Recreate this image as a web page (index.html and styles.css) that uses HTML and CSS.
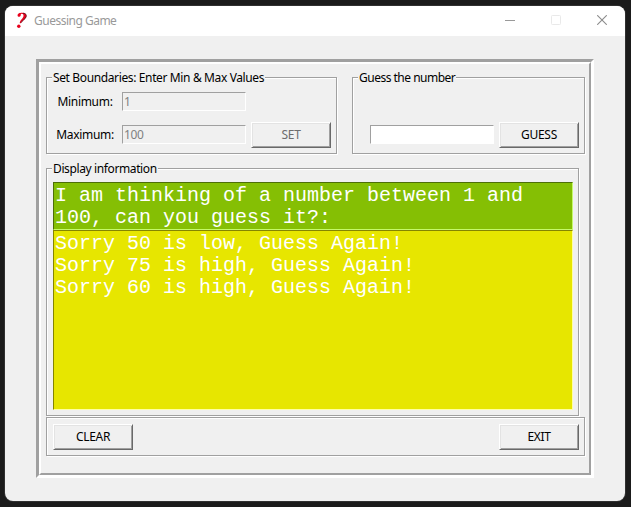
FILE: index.html
```html
<!DOCTYPE html>
<html lang="en">
<head>
<meta charset="utf-8">
<title>Guessing Game</title>
<link rel="stylesheet" href="styles.css">
</head>
<body>
<main class="window">
  <header class="titlebar">
    <svg class="logo" width="12" height="17" viewBox="0 0 12 17">
      <path d="M1.600 3.800C1.400 1.500 3.500.8 6 .8c3.200 0 4.600 1.300 4.200 3.700C9.700 7.600 5.600 8.500 4.800 11.300L3.800 11.200C3.600 8.300 7.200 6.700 7.500 4 7.700 2.500 6.600 1.600 5.200 1.900 4.500 2.100 4.900 3 4.600 3.700 4.100 5.100 1.800 5.100 1.600 3.800Z" fill="#e8001c"/>
      <path d="M7 1.200C10 1.400 10.600 3 10.100 4.800 9.400 7.300 6 8.400 5 10.800" fill="none" stroke="#6d1720" stroke-width="1"/>
      <circle cx="2.800" cy="14.200" r="1.700" fill="#e8001c"/>
    </svg>
    <h1 class="title">Guessing Game</h1>
    <div class="controls">
      <svg width="10" height="10" viewBox="0 0 10 10"><path d="M0 5.500H10" stroke="#999"/></svg>
      <svg width="10" height="10" viewBox="0 0 10 10"><rect x=".5" y=".5" width="9" height="9" rx=".8" fill="none" stroke="#e9e9e9"/></svg>
      <svg width="10" height="10" viewBox="0 0 10 10"><path d="M.2.2L9.800 9.800M9.800.2L.2 9.800" stroke="#8c8c8c" stroke-width="1.100"/></svg>
    </div>
  </header>
  <div class="frame">
    <div class="frame-inner">
      <div class="top-row">
        <section class="group bounds">
          <h2 class="legend legend-bounds">Set Boundaries: Enter Min &amp; Max Values</h2>
          <div class="bounds-grid">
            <span class="label">Minimum:</span>
            <span class="entry disabled">1</span>
            <span></span>
            <span class="label">Maximum:</span>
            <span class="entry disabled lower">100</span>
            <button class="button" disabled>SET</button>
          </div>
        </section>
        <section class="group guess">
          <h2 class="legend legend-guess">Guess the number</h2>
          <div class="guess-row">
            <span class="entry lower"></span>
            <button class="button">GUESS</button>
          </div>
        </section>
      </div>
      <section class="group display">
        <h2 class="legend legend-display">Display information</h2>
        <div class="text prompt">I am thinking of a number between 1 and
100, can you guess it?:</div>
        <div class="text log">Sorry 50 is low, Guess Again!
Sorry 75 is high, Guess Again!
Sorry 60 is high, Guess Again!</div>
      </section>
      <section class="group actions">
        <button class="button">CLEAR</button>
        <button class="button">EXIT</button>
      </section>
    </div>
  </div>
</main>
</body>
</html>
```

FILE: styles.css
```css
* { box-sizing: border-box; }

body {
  margin: 0;
  height: 507px;
  padding: 6px 6px 6px 5px;
  overflow: hidden;
  background: #1b1b1b;
  font: 12px/16px "Noto Sans", sans-serif;
  color: #000;
}

h1, h2 { margin: 0; font-size: 12px; font-weight: 400; }

.window {
  height: 495px;
  border-radius: 8px;
  background: #f0f0f0;
  overflow: hidden;
  box-shadow: 0 0 0 1px #303030;
}

.titlebar {
  display: flex;
  align-items: center;
  height: 30px;
  padding: 0 18px 2px 11px;
  background: #fff;
}

.logo { display: block; }

.title {
  margin-left: 6px;
  padding-top: 2px;
  color: #999;
  letter-spacing: -0.5px;
}

.controls { display: flex; gap: 36px; margin-left: auto; }
.controls svg { display: block; }

/* Wide ridge round the whole form */
.frame {
  width: 558px;
  height: 419px;
  margin: 23px 0 0 31px;
  border: 3px solid;
  border-color: #a0a0a0 #fff #fff #a0a0a0;
}

.frame-inner {
  height: 413px;
  padding: 13px 3px 0 5px;
  border: 2px solid;
  border-color: #fff #a0a0a0 #a0a0a0 #fff;
}

.top-row { display: flex; gap: 15px; }

.group {
  border: 1px solid #a0a0a0;
  box-shadow: 1px 1px #fff, inset 1px 1px #fff;
}

.legend {
  width: max-content;
  height: 16px;
  margin: -8px 0 0 5px;
  padding: 0 1px;
  background: #f0f0f0;
  line-height: 16px;
  white-space: nowrap;
}

.legend-bounds { letter-spacing: -0.37px; }
.legend-guess { letter-spacing: -0.5px; }
.legend-display { letter-spacing: -0.38px; }

.bounds { width: 291px; height: 77px; }
.guess { width: 233px; height: 77px; }

.bounds-grid {
  display: grid;
  grid-template-columns: 66px 124px 80px;
  grid-template-rows: 19px 26px;
  column-gap: 5px;
  row-gap: 11px;
  align-items: center;
  padding: 6px 0 0 4px;
}

.label { padding-left: 2px; text-align: center; letter-spacing: -0.3px; }

.entry {
  width: 124px;
  height: 19px;
  padding: 0 1px;
  border: 1px solid;
  border-color: #a0a0a0 #fff #fff #a0a0a0;
  background: #fff;
  line-height: 17px;
}

.lower { align-self: start; margin-top: 3px; }

.disabled { background: #f0f0f0; color: #808080; letter-spacing: -0.4px; }

.button {
  width: 80px;
  height: 26px;
  padding: 0;
  border: 1px solid;
  border-color: #fff #696969 #696969 #fff;
  border-radius: 0;
  background: #f0f0f0;
  box-shadow: inset 1px 1px #e3e3e3, inset -1px -1px #a0a0a0;
  color: #000;
  font: inherit;
  letter-spacing: -0.3px;
}

.button:disabled { color: #6d6d6d; }

.guess-row {
  display: flex;
  align-items: center;
  gap: 5px;
  padding: 36px 0 0 17px;
}

.display {
  width: 533px;
  height: 248px;
  margin-top: 14px;
  padding: 0 6px;
}

.legend-display { margin-left: -1px; margin-bottom: 5px; }

.text {
  width: 520px;
  padding: 2px 1px 0;
  border: 1px solid;
  font: 20px/22px "Liberation Mono", monospace;
  color: #fff;
  white-space: pre;
}

.prompt {
  height: 48px;
  background: #85bf04;
  border-color: #4d6f08 #c6fa6a #c6fa6a #4d6f08;
}

.log {
  height: 180px;
  background: #e7e600;
  border-color: #858500 #ffffa0 #ffffa0 #858500;
}

.actions {
  display: flex;
  justify-content: space-between;
  width: 539px;
  height: 39px;
  margin-top: 1px;
  padding: 6px 5px 0 6px;
}
```
